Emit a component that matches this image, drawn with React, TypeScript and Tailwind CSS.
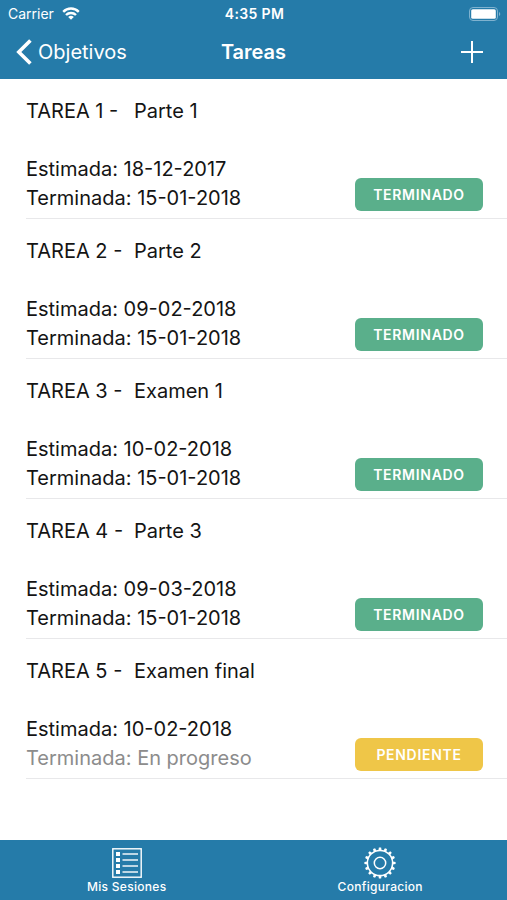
type Estado = 'TERMINADO' | 'PENDIENTE'

interface Tarea {
  id: number
  nombre: string
  estimada: string
  terminada: string | null
  estado: Estado
}

const tareas: Tarea[] = [
  { id: 1, nombre: 'Parte 1', estimada: '18-12-2017', terminada: '15-01-2018', estado: 'TERMINADO' },
  { id: 2, nombre: 'Parte 2', estimada: '09-02-2018', terminada: '15-01-2018', estado: 'TERMINADO' },
  { id: 3, nombre: 'Examen 1', estimada: '10-02-2018', terminada: '15-01-2018', estado: 'TERMINADO' },
  { id: 4, nombre: 'Parte 3', estimada: '09-03-2018', terminada: '15-01-2018', estado: 'TERMINADO' },
  { id: 5, nombre: 'Examen final', estimada: '10-02-2018', terminada: null, estado: 'PENDIENTE' },
]

function WifiIcon() {
  return (
    <svg viewBox="0 0 18 13" className="h-[13px] w-[18px]" fill="none" stroke="currentColor" strokeWidth="2.4" aria-hidden="true">
      <path d="M1.2 4.8a11 11 0 0 1 15.6 0" />
      <path d="M4 8a7.1 7.1 0 0 1 10 0" />
      <path d="M9 12.8 6.2 10a4 4 0 0 1 5.6 0Z" fill="currentColor" stroke="none" />
    </svg>
  )
}

function BatteryIcon() {
  return (
    <svg viewBox="0 0 32 14" className="h-[14px] w-8" aria-hidden="true">
      <rect x="0.5" y="0.5" width="28" height="13" rx="3.5" fill="none" stroke="#7fb2cf" />
      <rect x="2.2" y="2.2" width="24.6" height="9.6" rx="1.6" fill="white" />
      <path d="M30 5v4a2.2 2.2 0 0 0 0-4Z" fill="#7fb2cf" />
    </svg>
  )
}

function ListIcon() {
  return (
    <svg viewBox="0 0 30 30" className="size-[30px]" fill="none" stroke="currentColor" aria-hidden="true">
      <rect x="0.8" y="0.8" width="28.4" height="28.4" strokeWidth="1.4" />
      {[6, 12, 18, 24].map((y) => (
        <g key={y}>
          <rect x="4" y={y - 2} width="4" height="4" fill="currentColor" stroke="none" />
          <path d={`M10.5 ${y}H26`} strokeWidth="1.4" />
        </g>
      ))}
    </svg>
  )
}

function GearIcon() {
  const dientes = Array.from({ length: 16 }, (_, i) => (i * 360) / 16)

  return (
    <svg viewBox="0 0 32 32" className="size-8" fill="none" stroke="currentColor" aria-hidden="true">
      <circle cx="16" cy="16" r="12.6" strokeWidth="1.5" />
      <circle cx="16" cy="16" r="5.7" strokeWidth="1.5" />
      {dientes.map((angulo) => (
        <path key={angulo} d="M14.4 3.4 14.9 0.4h2.2l.5 3Z" fill="currentColor" stroke="none" transform={`rotate(${angulo} 16 16)`} />
      ))}
    </svg>
  )
}

function EstadoBadge({ estado }: { estado: Estado }) {
  const color = estado === 'TERMINADO' ? 'bg-[#5aaf8b]' : 'bg-[#efc648]'

  return (
    <button type="button" className={`h-[33px] w-32 rounded-md text-[14px] font-semibold tracking-wider text-white ${color}`}>
      {estado}
    </button>
  )
}

function TareaRow({ tarea }: { tarea: Tarea }) {
  return (
    <li className="ml-[26px] border-b border-[#e8e8ea] pt-[18px] pr-6 pb-[5px]">
      <h2 className="mb-[29px] flex">
        <span className="w-[108px]">TAREA {tarea.id} -</span>
        <span>{tarea.nombre}</span>
      </h2>
      <div className="flex items-end justify-between">
        <div>
          <p>Estimada: {tarea.estimada}</p>
          {/* Sin fecha de término la tarea sigue en progreso */}
          <p className={tarea.terminada ? '' : 'text-[#8c8c8c]'}>
            Terminada: {tarea.terminada ?? 'En progreso'}
          </p>
        </div>
        <div className="flex pb-0.5">
          <EstadoBadge estado={tarea.estado} />
        </div>
      </div>
    </li>
  )
}

export default function App() {
  return (
    <div className="flex min-h-screen flex-col bg-white font-['Inter','Liberation_Sans',sans-serif] text-[#141414]">
      <header className="bg-[#257ba9] text-white">
        <div className="grid h-[27px] grid-cols-3 items-center pr-1.5 pl-2 text-[14px]">
          <div className="flex items-center gap-2">
            <span>Carrier</span>
            <WifiIcon />
          </div>
          <span className="text-center font-semibold tracking-wide">4:35 PM</span>
          <div className="flex justify-end">
            <BatteryIcon />
          </div>
        </div>
        <nav className="grid h-[52px] grid-cols-3 items-center px-4 pb-0.5 text-[20px]">
          <a href="#objetivos" className="flex items-center gap-1.5">
            <svg viewBox="0 0 16 26" className="h-[26px] w-4" fill="none" stroke="currentColor" strokeWidth="3.6" aria-hidden="true">
              <path d="M14.4 1.4 2.8 13l11.6 11.6" />
            </svg>
            Objetivos
          </a>
          <h1 className="text-center font-semibold">Tareas</h1>
          <button type="button" aria-label="Agregar tarea" className="justify-self-end pr-2">
            <svg viewBox="0 0 22 22" className="size-[22px]" fill="none" stroke="currentColor" strokeWidth="2" aria-hidden="true">
              <path d="M11 0v22M0 11h22" />
            </svg>
          </button>
        </nav>
      </header>

      <main className="flex-1">
        <ul className="text-[20px] leading-[29px]">
          {tareas.map((tarea) => (
            <TareaRow key={tarea.id} tarea={tarea} />
          ))}
        </ul>
      </main>

      <nav className="grid h-[60px] grid-cols-2 bg-[#257ba9] text-[12px] font-medium tracking-wide text-white">
        <a href="#sesiones" className="flex flex-col items-center justify-end pb-1">
          <ListIcon />
          Mis Sesiones
        </a>
        <a href="#configuracion" className="flex flex-col items-center justify-end pb-1">
          <span className="-mb-px">
            <GearIcon />
          </span>
          Configuracion
        </a>
      </nav>
    </div>
  )
}
